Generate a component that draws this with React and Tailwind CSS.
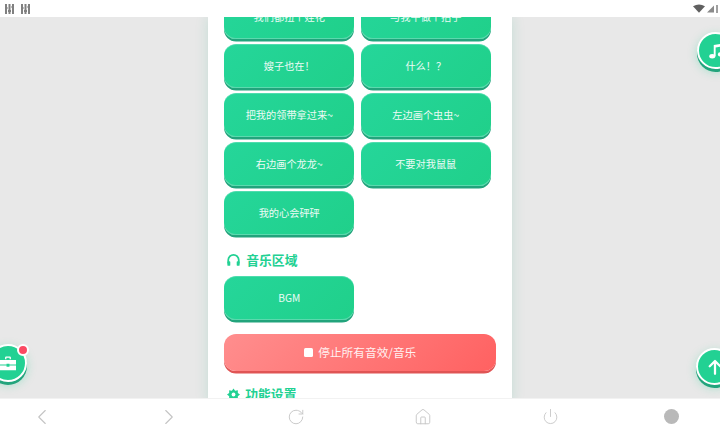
import React from "react";
import { ChevronLeft, ChevronRight, RotateCw, House, Power } from "lucide-react";

const cjk = "font-['Noto_Sans_CJK_SC','Noto_Sans',sans-serif]";

const rows = [
    ["我们都扭个娃花", "与我牛做个拍子"],
    ["嫂子也在！", "什么！？"],
    ["把我的领带拿过来~", "左边画个虫虫~"],
    ["右边画个龙龙~", "不要对我鼠鼠"],
    ["我的心会砰砰"],
];

const SoundButton = ({ label }) => (
    <button className="h-[44px] rounded-[12px] border-t border-[#4fdcae] bg-[linear-gradient(135deg,#25d69a,#20d08a)] pb-[2px] text-[10.2px] text-[#ecfbf5] shadow-[inset_0_-1px_0_#5cd9ae,0_2.500px_0_#22a47c]">
        {label}
    </button>
);

const StatusBars = () => (
    <svg width="9" height="10" viewBox="0 0 9 10" fill="#808080">
        <path d="M0 0h2v10H0zM3.500 0h2v10h-2zM7 0h2v10H7z" />
        <path d="M0 3h2.500v2H0zM3 6h3v2H3zM6.500 2H9v2H6.500z" />
    </svg>
);

const RoundButton = ({ className = "", children }) => (
    <div
        className={`absolute flex items-center justify-center rounded-full border-2 border-white bg-[#22d193] shadow-[0_3px_0_#22a47c,0_3px_10px_rgba(34,209,147,0.35)] ${className}`}
    >
        {children}
    </div>
);

export default function App() {
    return (
        <div className={`flex h-[434px] w-[720px] flex-col overflow-hidden bg-white ${cjk}`}>
            {/* Status bar */}
            <div className="flex h-[17px] items-center justify-between pl-[5px]">
                <div className="flex gap-[7px]">
                    <StatusBars />
                    <StatusBars />
                </div>
                <div className="flex items-center gap-[2px] pr-[2px]">
                    <svg width="12" height="9" viewBox="0 0 14 10" fill="#606060">
                        <path d="M0 2.500Q7 -2 14 2.500L7 10z" />
                    </svg>
                    <svg width="7" height="8" viewBox="0 0 9 9" fill="#8a8a8a">
                        <path d="M9 0v9H0z" />
                    </svg>
                    <div className="h-[8px] w-[2px] bg-[#a0a0a0]" />
                </div>
            </div>

            {/* Page */}
            <div className="relative flex h-[381px] justify-center overflow-hidden bg-[#e8e8e8]">
                <div className="h-fit w-[304px] shrink-0 bg-white pl-[16.250px] shadow-[0_0_12px_rgba(34,170,130,0.18)]">
                    <div className="mt-[-22px] grid w-[266.500px] grid-cols-[130px_130px] gap-x-[6.500px] gap-y-[5px]">
                        {rows.flat().map((label) => (
                            <SoundButton key={label} label={label} />
                        ))}
                    </div>

                    <div className="mt-[15px] flex h-[20px] items-center gap-[5px] pb-[1px] pl-[2px] text-[12.800px] font-bold text-[#22d193]">
                        <svg width="15" height="14" viewBox="0 0 24 24" fill="none" stroke="#22d193" strokeWidth="3">
                            <path d="M3 18v-6a9 9 0 0 1 18 0v6" />
                            <rect x="1.500" y="14" width="5" height="8" rx="1.500" fill="#22d193" stroke="none" />
                            <rect x="17.500" y="14" width="5" height="8" rx="1.500" fill="#22d193" stroke="none" />
                        </svg>
                        音乐区域
                    </div>

                    <div className="mt-[6px] grid w-[266.500px] grid-cols-[130px_130px] gap-x-[6.500px]">
                        <SoundButton label="BGM" />
                    </div>

                    <button className="mt-[14px] flex h-[37px] w-[272px] items-center justify-center gap-[5px] rounded-[12px] bg-[linear-gradient(135deg,#ff8e8e,#ff6161)] pb-[1px] text-[11.700px] text-[#fff1f1] shadow-[0_2.500px_0_#e05555]">
                        <span className="size-[9px] rounded-[1.500px] bg-white" />
                        停止所有音效/音乐
                    </button>

                    <div className="mt-[13px] flex h-[20px] items-center gap-[5px] pl-[3px] text-[12.800px] font-bold text-[#22d193]">
                        <svg width="13" height="13" viewBox="0 0 24 24" fill="#22d193">
                            <path d="M12 1l3 4 5-1 0 5 4 3-4 3 0 5-5-1-3 4-3-4-5 1 0-5-4-3 4-3 0-5 5 1z" />
                            <circle cx="12" cy="12" r="3.500" fill="#fff" />
                        </svg>
                        功能设置
                    </div>
                </div>

                <RoundButton className="right-[-14px] top-[15px] size-[37px]">
                    <svg width="18" height="18" viewBox="0 0 24 24" fill="#fff">
                        <path d="M9 4l12-2v14h-2.500V6L11.500 7.200V19H9z" />
                        <ellipse cx="7" cy="19" rx="4" ry="3" />
                        <ellipse cx="18" cy="16.500" rx="3.500" ry="2.800" />
                    </svg>
                </RoundButton>

                <RoundButton className="bottom-[16px] left-[-11px] size-[38px]">
                    <svg width="18" height="16" viewBox="0 0 24 22" fill="#fff">
                        <path d="M8 6V3.500A1.500 1.500 0 0 1 9.500 2h5A1.500 1.500 0 0 1 16 3.500V6h-1.800V3.800H9.800V6z" />
                        <path d="M1 7h22v6H14v-1h-4v1H1zM1 14.500h9V16h4v-1.500h9V21H1z" />
                    </svg>
                </RoundButton>
                <span className="absolute bottom-[42px] left-[17px] size-[12px] rounded-full border-2 border-white bg-[#fb4a63]" />

                <RoundButton className="bottom-[13px] right-[-13px] size-[37px]">
                    <svg width="18" height="18" viewBox="0 0 24 24" fill="none" stroke="#fff" strokeWidth="3" strokeLinecap="round" strokeLinejoin="round">
                        <path d="M12 21V4M5 11l7-7 7 7" />
                    </svg>
                </RoundButton>
            </div>

            {/* Browser nav */}
            <div className="flex h-[36px] items-center gap-[107px] border-t border-[#f2f2f2] pl-[32px] text-[#c4c4c4]">
                <span className="flex w-[20px] justify-center"><ChevronLeft size={26} strokeWidth={1} className="shrink-0" /></span>
                <span className="flex w-[20px] justify-center"><ChevronRight size={26} strokeWidth={1} className="shrink-0" /></span>
                <span className="flex w-[20px] justify-center"><RotateCw size={18} strokeWidth={1.200} /></span>
                <span className="flex w-[20px] justify-center"><House size={18} strokeWidth={1.200} /></span>
                <span className="flex w-[20px] justify-center"><Power size={17} strokeWidth={1.200} /></span>
                <span className="ml-[-6px] flex w-[20px] justify-center">
                    <span className="size-[15px] rounded-full bg-[#b9b9b9]" />
                </span>
            </div>
        </div>
    );
}
